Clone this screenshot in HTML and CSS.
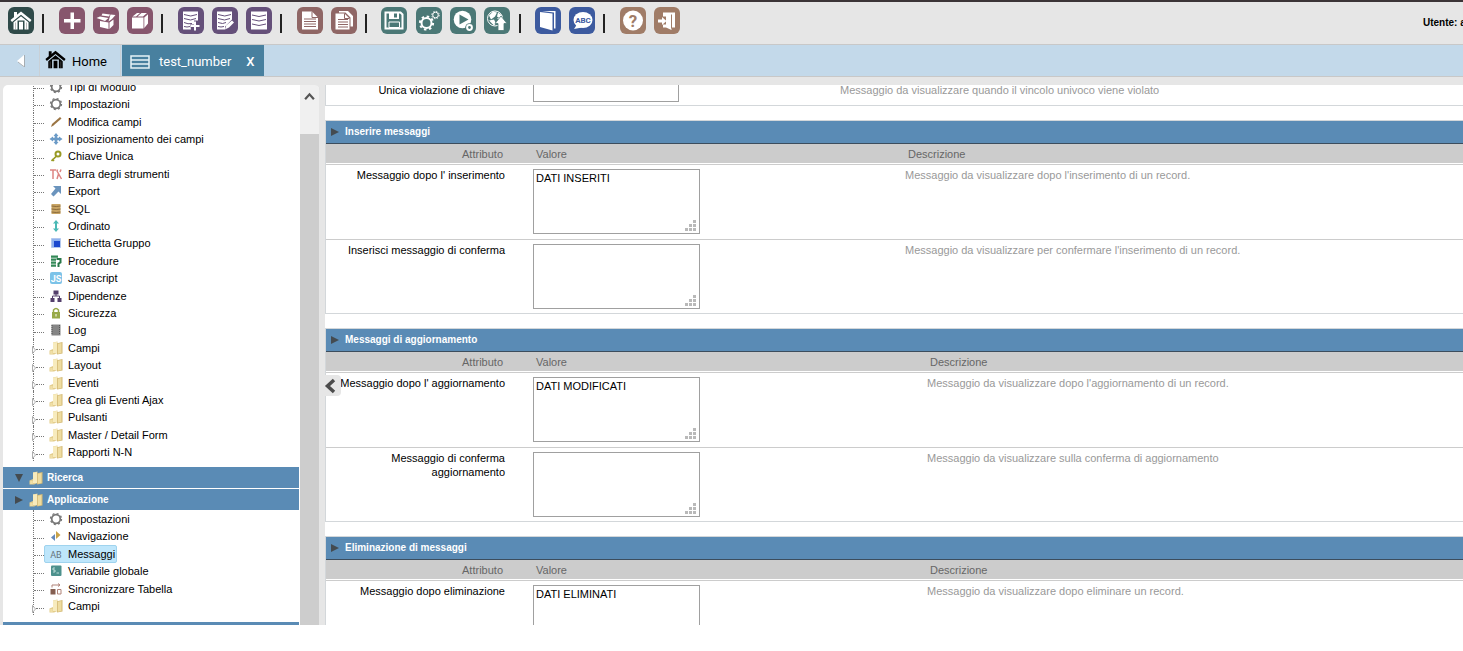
FILE: index.html
```html
<!DOCTYPE html>
<html lang="it">
<head>
<meta charset="utf-8">
<title>test_number</title>
<link rel="stylesheet" href="styles.css">
</head>
<body>
<svg class="sprite" aria-hidden="true">
  <symbol id="house" viewBox="0 0 26 26"><path d="M2.500 12.500 13 4l10.500 8.500-1.500 2L13 7.200 4 14.500z"/><path d="M5.500 14.700 13 8.700l7.500 6V22h-15zM9.500 13v9h7v-9z" fill-rule="evenodd"/><path d="M11 14.200h4V22h-4zM6 4.500h3v3.200l-3 2.500z"/><path d="M7.500 15v7M18.500 15v7" stroke="#777" stroke-width=".5"/></symbol>
  <symbol id="gear" viewBox="0 0 14 14"><circle cx="7" cy="7" r="4.300" fill="none" stroke="#777" stroke-width="1.700"/><circle cx="7" cy="7" r="5.500" fill="none" stroke="#777" stroke-width="1.300" stroke-dasharray="2 2.320"/></symbol>
  <symbol id="folder" viewBox="0 0 14 14"><path d="M.500 9.500 4 8V1.500L8.500.500V12L5 13.500H.500z" fill="#e3cd8c"/><path d="M4 1.500 8 1v11H4z" fill="#f7ebbd"/><path d="M8 2.200 13.500 1v11.500L8 13.500z" fill="#d3b974"/><path d="M8.800 2.800 12.500 2v10l-3.700.700z" fill="#eedca0"/><path d="M1.200 10h2.500v3H1.200z" fill="#f0dfa6"/></symbol>
  <symbol id="grip" viewBox="0 0 11 11"><path d="M8 0h3v3H8zM4 4h3v3H4zM8 4h3v3H8zM0 8h3v3H0zM4 8h3v3H4zM8 8h3v3H8z" fill="#b9b9b9"/></symbol>
  <symbol id="node" viewBox="0 0 4 8"><path d="M.5.500 3.500 4 .5 7.500z" fill="#fff" stroke="#999" stroke-width=".8"/></symbol>
</svg>

<header class="toolbar">
  <div class="tools">
    <button class="tool dark" aria-label="Home"><svg><use href="#house"/></svg></button>
    <span class="sep"></span>
    <button class="tool plum" aria-label="Nuovo"><svg viewBox="0 0 26 26"><path d="M11.500 5h3.500v6.500h6.500V15H15v6.500h-3.500V15H5v-3.500h6.500z"/></svg></button>
    <button class="tool plum" aria-label="Apri"><svg viewBox="0 0 26 26"><path d="M7 13.500 15.500 15v6.500L7 19.500zM16.500 15l4-3v5.500l-4 4zM3.500 10.500 7 9l8.500 1.500-3.500 3zM9.500 6l7.500 1-1 2-7.500-1zM17.500 7l5 .500-3.500 4-3.500 2.500z"/></svg></button>
    <button class="tool plum" aria-label="Pacchetto"><svg viewBox="0 0 26 26"><path d="M5 10h11.500v11H5zM17.300 10 21 6.800V16l-3.700 4.500zM5.500 9 10 5.500h3L9 9zM10.500 9l4-3.500H20L16 9z"/></svg></button>
    <span class="sep"></span>
    <button class="tool violet" aria-label="Aggiungi campo"><svg viewBox="0 0 26 26"><path d="M5 4h15v9h-4v4h-4l1 5H5z"/><path d="M6 7q7 3 13 0M6 11q7 3 12 0M6 15q4 2 8 1M6 19q3 1 6 0" class="ink"/><path d="M17 14v9M12.500 18.500h9" class="pen"/></svg></button>
    <button class="tool violet" aria-label="Modifica campo"><svg viewBox="0 0 26 26"><path d="M5 4h15v8l-7 7v3H5z"/><path d="M6 7q7 3 13 0M6 11q7 3 12 0M6 15q5 2 8 0M6 19q3 1 6 0" class="ink"/><path d="m13 22 1-4 6-5 2 2-5 5z"/></svg></button>
    <button class="tool violet" aria-label="Tabella"><svg viewBox="0 0 26 26"><path d="M5 4h16v18H5z"/><path d="M6 7.500q7 3 14 0M6 12q7 3 14 0M6 16.500q7 3 14 0" class="ink"/></svg></button>
    <span class="sep"></span>
    <button class="tool rose" aria-label="Documento"><svg viewBox="0 0 26 26"><path d="M5 4h10l6 6v12H5z"/><path d="M15 4v6h6M7 11.500h12M7 14h12M7 16.500h12M7 19h12" class="ink"/></svg></button>
    <button class="tool rose" aria-label="Copia documento"><svg viewBox="0 0 26 26"><path d="M4.500 6h9l5 5v11h-14z"/><path d="M8 3.500h9l5 5v10.500h-2.500v-9l-5-5H8z"/><path d="M13.500 6v5h5M7 12h10M7 14.500h10M7 17h10M7 19.500h10" class="ink"/></svg></button>
    <span class="sep"></span>
    <button class="tool green" aria-label="Salva"><svg viewBox="0 0 26 26"><path d="M4.500 5h15L21.500 7v14h-17z" class="pen hollow"/><path d="M8 5h10v6.500H8z"/><path d="M14.500 6v4" class="ink wide"/><path d="M8 14.500h10.500V20H8z" class="pen hollow thin"/></svg></button>
    <button class="tool green" aria-label="Impostazioni"><svg viewBox="0 0 26 26"><circle cx="10.500" cy="15.500" r="5" class="pen hollow"/><circle cx="10.500" cy="15.500" r="6.600" class="pen hollow" stroke-dasharray="2.500 2.680"/><circle cx="19.500" cy="7.500" r="2.800" class="pen hollow thin"/><circle cx="19.500" cy="7.500" r="3.700" class="pen hollow thin" stroke-dasharray="1.500 1.400"/></svg></button>
    <button class="tool green" aria-label="Esegui"><svg viewBox="0 0 26 26"><circle cx="12.500" cy="12" r="8.800"/><path d="m9.500 7 9 5-9 5z" class="hole"/><circle cx="19.500" cy="20" r="4.300" class="hole"/><circle cx="19.500" cy="20" r="2.400" class="pen hollow"/></svg></button>
    <button class="tool green" aria-label="Pubblica"><svg viewBox="0 0 26 26"><circle cx="11" cy="11" r="7.500" class="pen hollow thin"/><path d="m5 8 4-4 4 1-2 4-4 3zM14 5l4 3-2 3-3-2zM5 13l5-1 2 4-2 2zM13 11l3-1v3z"/><path d="m17 8.500 6 7.500h-3v7h-6v-7h-3z" stroke="#4b7876" stroke-width=".8"/></svg></button>
    <span class="sep"></span>
    <button class="tool blue" aria-label="Manuale"><svg viewBox="0 0 26 26"><path d="M5 4.500 17.500 6v17L5 19.500z"/><path d="M7 3.500h13.500V21H19V5z"/></svg></button>
    <button class="tool blue" aria-label="Traduzioni"><svg viewBox="0 0 26 26"><ellipse cx="14" cy="12.500" rx="9.500" ry="8"/><path d="M8 17 5 21.500l8-1.500z"/><text x="14" y="15.500" class="abc">ABC</text></svg></button>
    <span class="sep"></span>
    <button class="tool brown" aria-label="Aiuto"><svg viewBox="0 0 26 26"><circle cx="13" cy="13" r="10"/><text x="13" y="19" class="mark">?</text></svg></button>
    <button class="tool brown" aria-label="Esci"><svg viewBox="0 0 26 26"><path d="M9 5h12v15h-3.500v2.500L12 20H9v-3h3V9H9z"/><path d="M17.500 7v14" class="ink"/><path d="M4 12h4V9.500l4.500 4-4.500 4V15H4z"/></svg></button>
  </div>
  <div class="user">Utente: admin</div>
</header>

<nav class="tabs">
  <button class="back" aria-label="Indietro"><svg viewBox="0 0 8 12"><path d="M7 0v12L0 6z" fill="#fff"/><path d="M7.500 0v12L1 7" fill="none" stroke="#999" stroke-width=".7"/></svg></button>
  <a class="tab" href="#"><svg class="home-icon"><use href="#house"/></svg>Home</a>
  <div class="tab active"><svg class="list-icon" viewBox="0 0 20 14"><path d="M1 1h18v12H1zM1 5h18M1 9h18" fill="none" stroke="#e5f2f8" stroke-width="1.500"/></svg><a href="#">test_number</a><button class="close" aria-label="Chiudi">X</button></div>
</nav>

<div class="workspace">
  <aside class="sidebar">
    <div class="tree">
      <ul class="branch-list first">
        <li><i class="twig"></i><a href="#"><svg><use href="#gear"/></svg>Tipi di Modulo</a></li>
        <li><i class="twig"></i><a href="#"><svg><use href="#gear"/></svg>Impostazioni</a></li>
        <li><i class="twig"></i><a href="#"><svg viewBox="0 0 14 14"><path d="m2 12 1-3 8-7 1.500 1.500-8 7z" fill="#9b7544"/></svg>Modifica campi</a></li>
        <li><i class="twig"></i><a href="#"><svg viewBox="0 0 14 14"><path d="m7 1 2.500 3H8.300v1.700H10V4.500L13.500 7 10 9.500V8.300H8.300V10h1.200L7 13l-2.500-3h1.200V8.300H4v1.200L.5 7 4 4.500v1.200h1.700V4H4.500z" fill="#6c9bc7"/></svg>Il posizionamento dei campi</a></li>
        <li><i class="twig"></i><a href="#"><svg viewBox="0 0 14 14"><circle cx="9" cy="5" r="2.500" fill="none" stroke="#989a25" stroke-width="2"/><path d="m7.500 7-5 5M3 10l2 2" stroke="#989a25" stroke-width="1.700"/></svg>Chiave Unica</a></li>
        <li><i class="twig"></i><a href="#"><svg viewBox="0 0 14 14"><path d="M1 3h6M4 3v9M8.500 2.500 8 4l4.500 8M12 2.500 11 5M9.500 7 8 12" fill="none" stroke="#dd8583" stroke-width="1.500"/></svg>Barra degli strumenti</a></li>
        <li><i class="twig"></i><a href="#"><svg viewBox="0 0 14 14"><path d="M4 2h8v8l-2.500-2.500L4.500 12.500 2 10l4.500-5.500z" fill="#6b94bd"/></svg>Export</a></li>
        <li><i class="twig"></i><a href="#"><svg viewBox="0 0 14 14"><path d="M2.500 2h9v10h-9z" fill="#c9a565"/><path d="M2.500 4q5 1 9 0M2.500 7q5 1 9 0M2.500 10q5 1 9 0" fill="none" stroke="#8b6b3b"/></svg>SQL</a></li>
        <li><i class="twig"></i><a href="#"><svg viewBox="0 0 14 14"><path d="m7 1 3 3.500H8v5h2L7 13 4 9.500h2v-5H4z" fill="#4bb9b5"/></svg>Ordinato</a></li>
        <li><i class="twig"></i><a href="#"><svg viewBox="0 0 14 14"><path d="M2.500 2.500h9v9h-9z" fill="#8eb1ed" stroke="#b3c8ee"/><path d="M5 5h6v6H5z" fill="#1c49ce"/></svg>Etichetta Gruppo</a></li>
        <li><i class="twig"></i><a href="#"><svg viewBox="0 0 14 14"><path d="M2 1.500h7v2.200H2zM2 4.500h5v2.200H2zM2 7.500h5v2.200H2zM2 10.500h5v2.200H2z" fill="#338957"/><path d="M7.500 5h4v3.500l-2 1V13" fill="none" stroke="#28784a" stroke-width="2"/></svg>Procedure</a></li>
        <li><i class="twig"></i><a href="#"><svg viewBox="0 0 14 14"><rect x="1" y="1" width="12" height="12" rx="2" fill="#7cc3e8"/><text x="7" y="10.500" class="glyph">JS</text></svg>Javascript</a></li>
        <li><i class="twig"></i><a href="#"><svg viewBox="0 0 14 14"><path d="M4.500 1.500h5v4h-5zM1.500 9h4v4h-4zM8.500 9h4v4h-4z" fill="#54406c"/><path d="M7 5v2M3.500 9V7h7v2" fill="none" stroke="#54406c"/></svg>Dipendenze</a></li>
        <li><i class="twig"></i><a href="#"><svg viewBox="0 0 14 14"><path d="M3 6h8v6.500H3z" fill="#98a947"/><path d="M4.500 6V4q2.500-3 5 0v2" fill="none" stroke="#98a947" stroke-width="1.500"/><path d="M7 8v2.500" stroke="#fff"/></svg>Sicurezza</a></li>
        <li><i class="twig"></i><a href="#"><svg viewBox="0 0 14 14"><path d="M2.500 1.500h9v11h-9z" fill="#858585"/><path d="M3 2v10M10.500 2v10" stroke="#555" stroke-dasharray="1 1"/></svg>Log</a></li>
        <li><i class="twig node"><svg><use href="#node"/></svg></i><a href="#"><svg><use href="#folder"/></svg>Campi</a></li>
        <li><i class="twig node"><svg><use href="#node"/></svg></i><a href="#"><svg><use href="#folder"/></svg>Layout</a></li>
        <li><i class="twig node"><svg><use href="#node"/></svg></i><a href="#"><svg><use href="#folder"/></svg>Eventi</a></li>
        <li><i class="twig node"><svg><use href="#node"/></svg></i><a href="#"><svg><use href="#folder"/></svg>Crea gli Eventi Ajax</a></li>
        <li><i class="twig node"><svg><use href="#node"/></svg></i><a href="#"><svg><use href="#folder"/></svg>Pulsanti</a></li>
        <li><i class="twig node"><svg><use href="#node"/></svg></i><a href="#"><svg><use href="#folder"/></svg>Master / Detail Form</a></li>
        <li><i class="twig node"><svg><use href="#node"/></svg></i><a href="#"><svg><use href="#folder"/></svg>Rapporti N-N</a></li>
      </ul>
      <button class="group"><svg class="arrow" viewBox="0 0 8 8"><path d="M0 0h8L4 8z"/></svg><svg class="folder"><use href="#folder"/></svg>Ricerca</button>
      <button class="group"><svg class="arrow" viewBox="0 0 8 8"><path d="m0 0 8 4-8 4z"/></svg><svg class="folder"><use href="#folder"/></svg>Applicazione</button>
      <ul class="branch-list second">
        <li><i class="twig"></i><a href="#"><svg><use href="#gear"/></svg>Impostazioni</a></li>
        <li><i class="twig"></i><a href="#"><svg viewBox="0 0 14 14"><path d="M6 5v7L2 8.500z" fill="#6588b8"/><path d="M7 2v8l4.500-4z" fill="#c9a348"/></svg>Navigazione</a></li>
        <li><i class="twig"></i><a href="#" class="selected"><svg viewBox="0 0 14 14"><text x="7" y="11" class="glyph ab">AB</text></svg>Messaggi</a></li>
        <li><i class="twig"></i><a href="#"><svg viewBox="0 0 14 14"><rect x="2" y="1.500" width="10.500" height="10.500" rx="1" fill="#4d918d"/><path d="M6 4H4v2h2v2H4M7.500 9H10" fill="none" stroke="#d5eeea" stroke-width=".8"/></svg>Variabile globale</a></li>
        <li><i class="twig"></i><a href="#"><svg viewBox="0 0 14 14"><path d="M1.500 7h5v5.500h-5z" fill="#855f51"/><path d="M8.500 7.500H12V12H8.500zM3 5.500V3h8M9 1.500 11 3 9 4.500" fill="none" stroke="#b08378"/></svg>Sincronizzare Tabella</a></li>
        <li><i class="twig node"><svg><use href="#node"/></svg></i><a href="#"><svg><use href="#folder"/></svg>Campi</a></li>
      </ul>
      <div class="group"></div>
    </div>
    <div class="scrollbar"><div class="scroll-up"><svg viewBox="0 0 10 8"><path d="m1 6.500 4-4.500 4 4.500" fill="none" stroke="#555" stroke-width="2"/></svg></div></div>
  </aside>

  <main class="content">
    <section class="panel partial">
      <table>
        <colgroup><col class="c-label"><col class="c-value-s"><col></colgroup>
        <tbody><tr><td class="label"><label for="uniq">Unica violazione di chiave</label></td><td><input id="uniq" type="text"></td><td class="desc">Messaggio da visualizzare quando il vincolo univoco viene violato</td></tr></tbody>
      </table>
    </section>
    <section class="panel">
      <h2><svg class="arrow" viewBox="0 0 8 8"><path d="m0 0 8 4-8 4z"/></svg>Inserire messaggi</h2>
      <table>
        <colgroup><col class="c-label"><col class="c-value"><col></colgroup>
        <thead><tr><th class="label">Attributo</th><th>Valore</th><th>Descrizione</th></tr></thead>
        <tbody>
          <tr><td class="label"><label for="ins">Messaggio dopo l' inserimento</label></td><td><div class="box"><textarea id="ins">DATI INSERITI</textarea><svg class="grip"><use href="#grip"/></svg></div></td><td class="desc">Messaggio da visualizzare dopo l'inserimento di un record.</td></tr>
          <tr><td class="label"><label for="insc">Inserisci messaggio di conferma</label></td><td><div class="box"><textarea id="insc"></textarea><svg class="grip"><use href="#grip"/></svg></div></td><td class="desc">Messaggio da visualizzare per confermare l'inserimento di un record.</td></tr>
        </tbody>
      </table>
    </section>
    <section class="panel">
      <h2><svg class="arrow" viewBox="0 0 8 8"><path d="m0 0 8 4-8 4z"/></svg>Messaggi di aggiornamento</h2>
      <table>
        <colgroup><col class="c-label"><col class="c-value-l"><col></colgroup>
        <thead><tr><th class="label">Attributo</th><th>Valore</th><th>Descrizione</th></tr></thead>
        <tbody>
          <tr><td class="label"><label for="upd">Messaggio dopo l' aggiornamento</label></td><td><div class="box"><textarea id="upd">DATI MODIFICATI</textarea><svg class="grip"><use href="#grip"/></svg></div></td><td class="desc">Messaggio da visualizzare dopo l'aggiornamento di un record.</td></tr>
          <tr><td class="label"><label for="updc">Messaggio di conferma aggiornamento</label></td><td><div class="box"><textarea id="updc"></textarea><svg class="grip"><use href="#grip"/></svg></div></td><td class="desc">Messaggio da visualizzare sulla conferma di aggiornamento</td></tr>
        </tbody>
      </table>
    </section>
    <section class="panel">
      <h2><svg class="arrow" viewBox="0 0 8 8"><path d="m0 0 8 4-8 4z"/></svg>Eliminazione di messaggi</h2>
      <table>
        <colgroup><col class="c-label"><col class="c-value-l"><col></colgroup>
        <thead><tr><th class="label">Attributo</th><th>Valore</th><th>Descrizione</th></tr></thead>
        <tbody>
          <tr><td class="label"><label for="del">Messaggio dopo eliminazione</label></td><td><div class="box"><textarea id="del">DATI ELIMINATI</textarea></div></td><td class="desc">Messaggio da visualizzare dopo eliminare un record.</td></tr>
        </tbody>
      </table>
    </section>
  </main>
  <button class="collapse" aria-label="Comprimi"><svg viewBox="0 0 12 16"><path d="M10 2 3.500 8 10 14" fill="none" stroke="#4c4c4c" stroke-width="3.500"/></svg></button>
</div>
</body>
</html>
```
FILE: styles.css
```css
* { box-sizing: border-box; }
body {
  margin: 0;
  height: 100vh;
  padding-bottom: 26px;
  display: flex;
  flex-direction: column;
  overflow: hidden;
  background: #fff;
  color: #000;
  font: 11px/14px "Liberation Sans", Arial, sans-serif;
}
button { font: inherit; border: 0; padding: 0; background: none; cursor: pointer; }
a { color: inherit; text-decoration: none; }
svg { display: block; flex: none; }
.sprite { position: absolute; width: 0; height: 0; }

/* toolbar */
.toolbar {
  flex: none;
  height: 45px;
  display: flex;
  justify-content: space-between;
  padding: 5px 0 0 8px;
  background: #e6e6e6;
  border-top: 2px solid #3b3437;
  border-bottom: 1px solid #c8c8c8;
  overflow: hidden;
}
.tools { display: flex; justify-content: space-between; width: 672px; }
.tool { width: 26px; height: 27px; border-radius: 6px; background: var(--c); }
.tool svg { width: 26px; height: 27px; fill: #fff; }
.dark { --c: #2f4a49; }
.plum { --c: #87566d; }
.violet { --c: #65507a; }
.rose { --c: #8f6665; }
.green { --c: #4b7876; }
.blue { --c: #3c5a9f; }
.brown { --c: #a07c67; }
.ink { fill: none; stroke: var(--c); stroke-width: 1; }
.wide { stroke-width: 3; }
.hole { fill: var(--c); }
.pen { stroke: #fff; stroke-width: 2; }
.thin { stroke-width: 1; }
.hollow { fill: none; }
.abc, .mark { fill: var(--c); text-anchor: middle; font: bold 8px Roboto, sans-serif; }
.mark { font-size: 17px; }
.sep { width: 8px; height: 19px; margin-top: 7px; border-left: 2px solid #222; }
.user { width: 40px; margin-top: 9px; font-size: 10px; font-weight: bold; white-space: nowrap; }

/* tabs */
.tabs {
  flex: none;
  height: 32px;
  display: flex;
  background: #c3d9ea;
  border-bottom: 1px solid #c8c8c8;
  font: 13px/32px Roboto, sans-serif;
}
.back { width: 40px; padding-left: 17px; border-right: 1px solid #c9d0d6; }
.back svg { width: 8px; height: 12px; }
.tab { display: flex; align-items: center; padding: 2px 13px 0 3px; border-right: 1px solid #c9d0d6; }
.home-icon { width: 25px; height: 25px; margin: 0 4px 4px 0; }
.active { margin-left: 1px; padding: 2px 9px 0 8px; border: 0; background: #48809f; color: #fff; }
.list-icon { width: 20px; height: 14px; margin-right: 9px; }
.close { margin-left: 15px; color: #fff; font-weight: 500; }

/* panels */
.workspace {
  flex: 1;
  min-height: 0;
  position: relative;
  display: flex;
  gap: 5px;
  padding: 8px 0 0 3px;
  background: #e6e6e6;
}
.sidebar { flex: none; width: 317px; display: flex; overflow: hidden; border-radius: 5px 5px 0 0; background: #fff; }
.tree { flex: 1; overflow: hidden; padding-right: 1px; }
.branch-list { display: flex; flex-direction: column; margin: 0; padding: 0 0 0 30px; list-style: none; }
.first { height: 383px; margin: -7px 0 6px; }
.second { height: 105px; margin: -1px 0 7px; }
.branch-list li { flex: 1; min-height: 0; display: flex; align-items: center; }
.twig { align-self: stretch; width: 11px; border-left: 1px dotted #777; }
.twig::after { content: ""; display: block; margin-top: 10px; border-top: 1px dotted #777; }
.node { display: flex; }
.node::after { flex: 1; margin-top: 10px; height: 1px; }
.node svg { width: 4px; height: 8px; margin: 7px 0 0 -2px; }
.branch-list a { display: flex; align-items: center; height: 18px; padding: 0 1px 0 4px; border: 1px solid transparent; border-radius: 2px; white-space: nowrap; }
.branch-list a svg { width: 14px; height: 14px; margin-right: 5px; }
.branch-list .selected { background: #bee6fb; border-color: #9fd3ee; }
.glyph { fill: #fff; text-anchor: middle; font: bold 9px Roboto, sans-serif; }
.ab { fill: #66747c; font-weight: normal; }
.group {
  width: 100%;
  height: 21px;
  margin-bottom: 1px;
  padding-left: 12px;
  display: flex;
  align-items: center;
  background: #5a8bb5;
  color: #fff;
  font-size: 10px;
  font-weight: bold;
}
.arrow { width: 8px; height: 8px; fill: #444b50; }
.folder { width: 14px; height: 14px; margin: 0 4px 0 6px; }
.scrollbar { width: 20px; background: #cdcdcd; border-right: 1px solid #e6e6e6; }
.scroll-up { height: 49px; padding: 7px 0 0 4px; background: #f0f0f0; }
.scroll-up svg { width: 11px; height: 9px; }

/* attribute tables */
.content { flex: 1; min-width: 0; overflow: hidden; background: #fff; }
.panel { margin-bottom: 14px; border: 1px solid #d3d7da; border-right: 0; }
.partial { margin-top: -5px; border-top: 0; }
h2 {
  display: flex;
  align-items: center;
  gap: 6px;
  height: 23px;
  margin: 0;
  padding: 0 5px;
  background: #5a8bb5;
  border-bottom: 1px solid #3c4d5d;
  color: #fff;
  font-size: 10px;
  font-weight: bold;
}
table { width: 100%; table-layout: fixed; border-collapse: separate; border-spacing: 0; }
.c-label { width: 207px; }
.c-value-s { width: 307px; }
.c-value { width: 372px; }
.c-value-l { width: 394px; }
th { height: 20px; padding: 0 3px; background: #ccc; border-bottom: 1px solid #fff; color: #666; font-size: 11px; font-weight: normal; text-align: left; }
th.label { padding-right: 30px; text-align: right; }
td { padding: 4px 0 5px; border-top: 1px solid #ccc; vertical-align: top; }
tr:last-child td { padding-bottom: 4px; }
td.label { padding: 3px 28px 0 10px; text-align: right; }
td.desc { padding-top: 3px; color: #999; }
.partial td { border-top: 0; }
.partial tr:last-child td { padding-bottom: 3px; }
input, textarea { display: block; margin: 0; border: 1px solid #a0a0a0; border-radius: 0; background: #fff; font: inherit; color: #000; }
input { width: 146px; height: 18px; }
.box { position: relative; width: 167px; }
textarea { width: 100%; height: 65px; padding: 1px 2px; resize: none; overflow: hidden; }
.grip { position: absolute; right: 4px; bottom: 3px; width: 11px; height: 11px; }
.collapse { position: absolute; left: 320px; top: 298px; width: 21px; height: 21px; padding: 2px 4px; border-radius: 4px; background: #e6e6e6; }
.collapse svg { width: 12px; height: 16px; }
```
